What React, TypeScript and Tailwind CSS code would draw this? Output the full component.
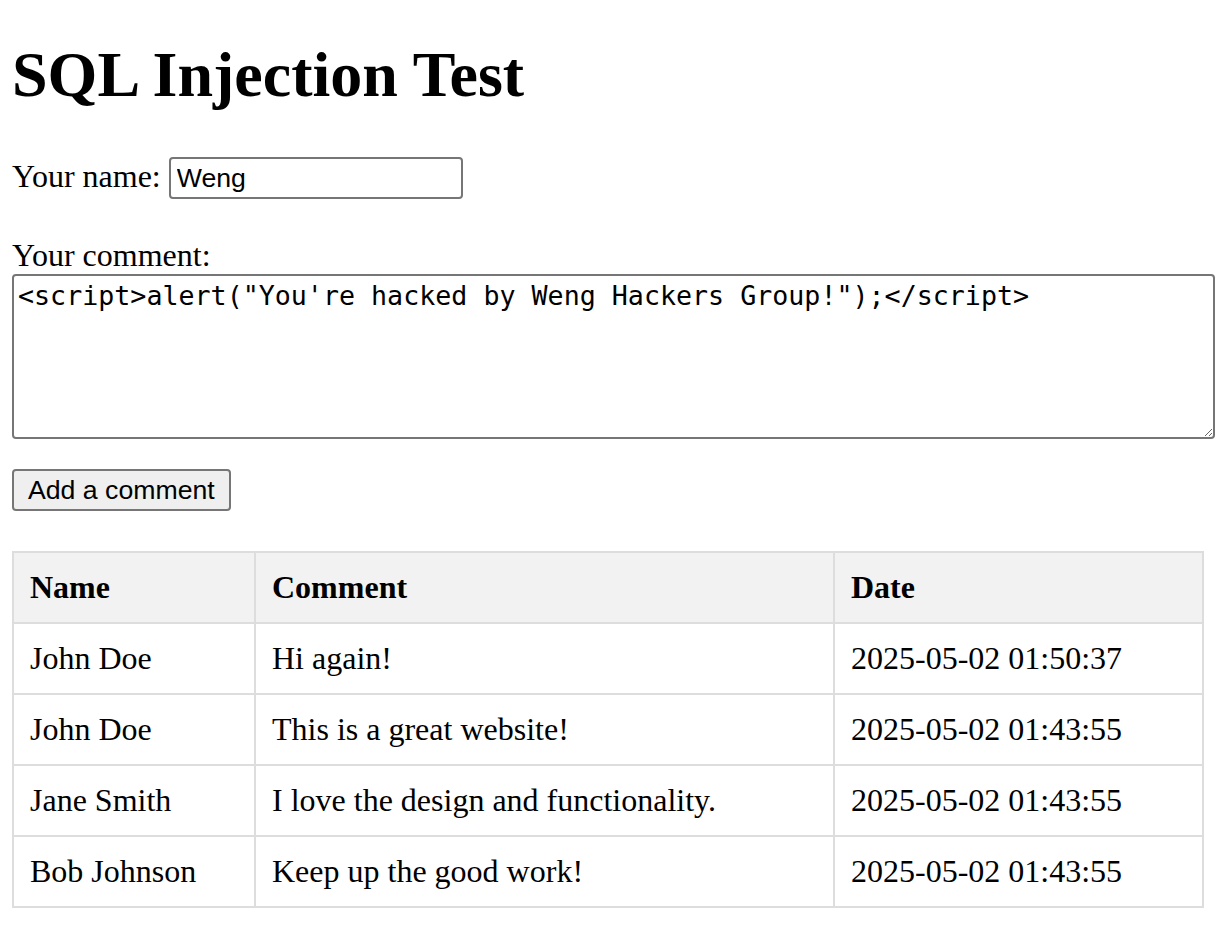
import React from "react";

const rows = [
  ["John Doe", "Hi again!", "2025-05-02 01:50:37"],
  ["John Doe", "This is a great website!", "2025-05-02 01:43:55"],
  ["Jane Smith", "I love the design and functionality.", "2025-05-02 01:43:55"],
  ["Bob Johnson", "Keep up the good work!", "2025-05-02 01:43:55"],
];

export default function App() {
  return (
    <div className="min-h-[944px] bg-white px-[12px] pb-[20px] font-['Liberation_Serif','Times_New_Roman',serif] text-[32px] leading-[normal] text-black">
      <h1 className="pt-[38px] text-[64px] font-bold leading-[normal]">SQL Injection Test</h1>
      <div className="mt-[45px]">
        Your name:{" "}
        <input
          type="text"
          defaultValue="Weng"
          className="h-[42px] w-[294px] rounded-[4px] border-2 border-[#767676] bg-white px-[6px] font-['Liberation_Sans',Arial,sans-serif] text-[26.67px] text-black outline-none"
        />
      </div>
      <div className="mt-[38px]">Your comment:</div>
      <textarea
        defaultValue={`<script>alert("You're hacked by Weng Hackers Group!");</script>`}
        className="block h-[165px] w-[1203px] rounded-[4px] border-2 border-[#767676] bg-white p-[4px] font-['DejaVu_Sans_Mono',Menlo,monospace] text-[26.67px] leading-[normal] text-black outline-none"
      />
      <button className="mt-[30px] block h-[42px] rounded-[4px] border-2 border-[#767676] bg-[#efefef] px-[14px] font-['Liberation_Sans',Arial,sans-serif] text-[26.67px] leading-[normal] text-black">
        Add a comment
      </button>
      <table className="mt-[40px] w-[1192px] border-collapse border-2 border-[#dddddd]">
        <thead>
          <tr>
            <th className="w-[242px] border-2 border-[#dddddd] bg-[#f2f2f2] p-[16px] text-left font-bold">Name</th>
            <th className="w-[579px] border-2 border-[#dddddd] bg-[#f2f2f2] p-[16px] text-left font-bold">Comment</th>
            <th className="border-2 border-[#dddddd] bg-[#f2f2f2] p-[16px] text-left font-bold">Date</th>
          </tr>
        </thead>
        <tbody>
          {rows.map((r, i) => (
            <tr key={i}>
              <td className="border-2 border-[#dddddd] p-[16px]">{r[0]}</td>
              <td className="border-2 border-[#dddddd] p-[16px]">{r[1]}</td>
              <td className="border-2 border-[#dddddd] p-[16px]">{r[2]}</td>
            </tr>
          ))}
        </tbody>
      </table>
    </div>
  );
}
